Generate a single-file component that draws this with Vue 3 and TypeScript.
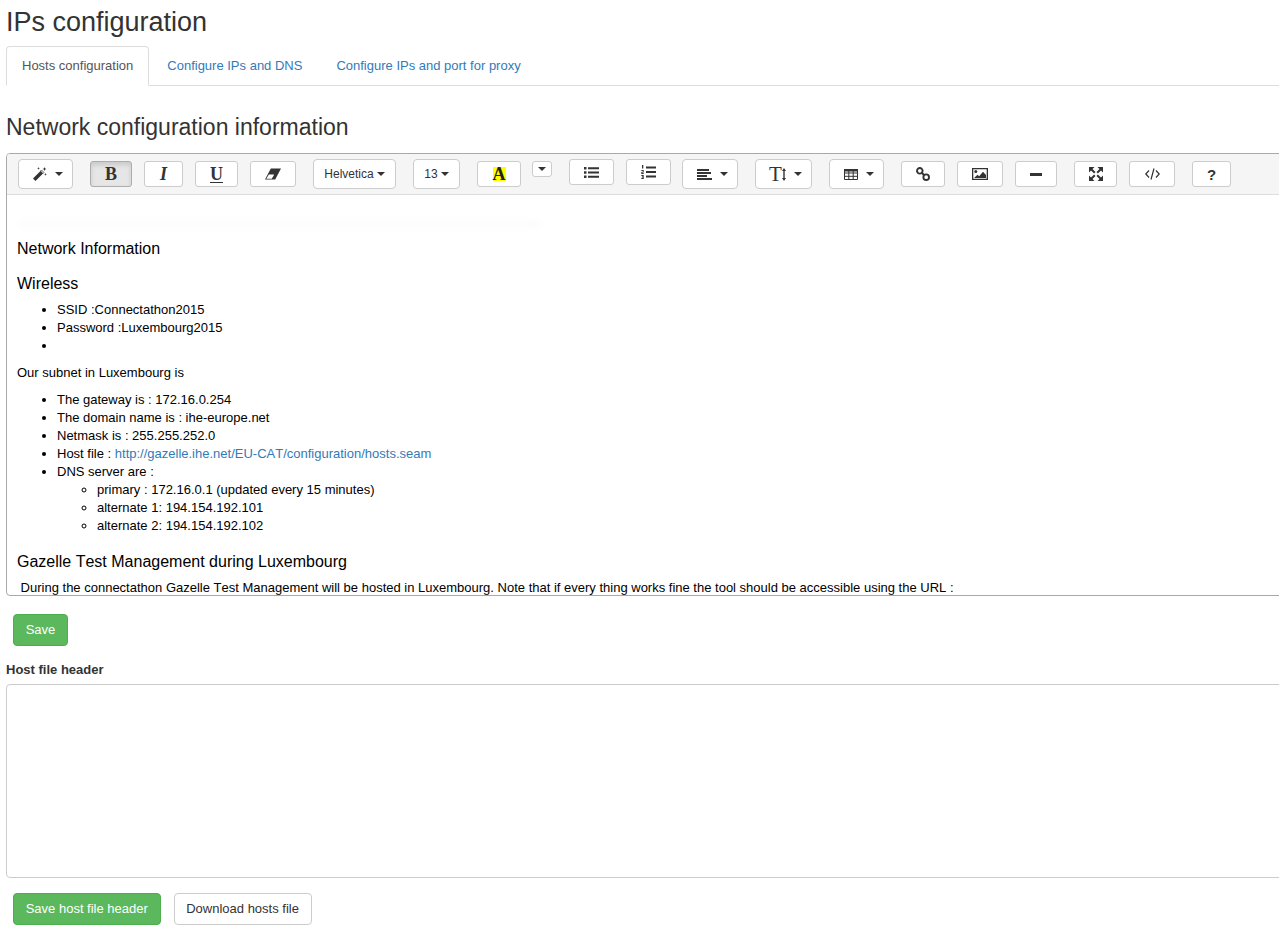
<script setup lang="ts">
const dns = ['primary : 172.16.0.1 (updated every 15 minutes)', 'alternate 1: 194.154.192.101', 'alternate 2: 194.154.192.102']
</script>

<template>
  <div class="page">
    <h1 class="title">IPs configuration</h1>
    <ul class="tabs">
      <li class="tab active">Hosts configuration</li>
      <li class="tab">Configure IPs and DNS</li>
      <li class="tab">Configure IPs and port for proxy</li>
    </ul>
    <h2 class="subtitle">Network configuration information</h2>

    <div class="editor">
      <div class="toolbar">
        <button class="btn tall drop w55 m0">
          <svg class="ico" viewBox="0 0 14 14"><path d="M0 11.500 8.500 3l2.500 2.500L2.500 14z" fill="#333"/><path d="M7.500 4 8.500 3 11 5.500l-1 1z" fill="#fff" stroke="#333" stroke-width=".6"/><path d="M11.500 0l.6 1.400 1.400.6-1.400.6-.6 1.400-.6-1.400-1.400-.6 1.400-.6zM5.500 0l.4 1 1 .4-1 .4-.4 1-.4-1-1-.4 1-.4zM12.500 6l.4 1 1 .4-1 .4-.4 1-.4-1-1-.4 1-.4z" fill="#333"/></svg>
          <i class="caret"></i>
        </button>
        <button class="btn short pressed serif m17 w42"><b>B</b></button>
        <button class="btn short serif m12 w39"><b><em>I</em></b></button>
        <button class="btn short serif m12 w43"><b class="under">U</b></button>
        <button class="btn short m12 w46">
          <svg class="eraser" viewBox="0 0 16 12"><path d="M5.800.5H16L10.200 11.500H0z" fill="#333"/><path d="M1.300 10.700 3.800 6.500h5.400L6.800 10.700z" fill="#fff"/></svg>
        </button>
        <button class="btn tall small m17 w83">Helvetica <i class="caret"></i></button>
        <button class="btn tall small m17 w47">13 <i class="caret"></i></button>
        <button class="btn short serif m17 w44"><b class="hl">A</b></button>
        <button class="btn mini m11 w20"><i class="caret"></i></button>
        <button class="btn mid m17 w45">
          <svg class="ico15" viewBox="0 0 15 11"><path d="M0 0h2.500v2.500H0zM0 4.200h2.500v2.500H0zM0 8.400h2.500v2.500H0zM4 .3h11v2H4zM4 4.500h11v2H4zM4 8.700h11v2H4z" fill="#333"/></svg>
        </button>
        <button class="btn mid m12 w45">
          <svg class="ico15 ol" viewBox="0 0 15 14"><path d="M5 1.500h10v2H5zM5 6h10v2H5zM5 10.500h10v2H5zM1 0h1.300v3.500H1zM.3 5h2.400v2.500H1.300v.6h1.400V9H.3V7h1.400v-.9H.3zM.3 10h2.400v4H.3v-.9h1.400v-.6H.9v-.9h.8v-.7H.3z" fill="#333"/></svg>
        </button>
        <button class="btn tall drop m11 w56">
          <svg class="ico15" viewBox="0 0 15 11"><path d="M0 0h12v2H0zM0 3h14v2H0zM0 6h10v2H0zM0 9h15v2H0z" fill="#333"/></svg>
          <i class="caret"></i>
        </button>
        <button class="btn tall drop m17 w57">
          <span class="ti">T<svg class="updown" viewBox="0 0 4 13"><path d="M2 0 4 3H2.700v7H4l-2 3-2-3h1.300V3H0z" fill="#333"/></svg></span>
          <i class="caret"></i>
        </button>
        <button class="btn tall drop m17 w55">
          <svg class="ico15 tbl" viewBox="0 0 14 11"><path fill="none" stroke="#333" stroke-width="1" d="M.5.500h13v10H.5zM.5 4h13M.5 7.300h13M4.800.5v10M9.200.5v10"/><path d="M0 0h14v2.400H0z" fill="#333"/></svg>
          <i class="caret"></i>
        </button>
        <button class="btn short m17 w44">
          <svg class="ico" viewBox="0 0 14 14"><circle cx="3.800" cy="3.800" r="2.800" fill="none" stroke="#333" stroke-width="1.900"/><circle cx="10.200" cy="10.200" r="2.800" fill="none" stroke="#333" stroke-width="1.900"/><path d="M5.500 5.500l3 3" stroke="#333" stroke-width="2"/></svg>
        </button>
        <button class="btn short m12 w46">
          <svg class="pic" viewBox="0 0 16 12"><path fill="none" stroke="#333" stroke-width="1.300" d="M.65.650h14.700v10.700H.65z"/><circle cx="3.800" cy="3.500" r="1.500" fill="#333"/><path d="M2 10l3.500-3.200 1.700 1.500L11 3.800l3 3.200V10z" fill="#333"/></svg>
        </button>
        <button class="btn short m12 w42"><span class="hr"></span></button>
        <button class="btn short m17 w43">
          <svg class="ico" viewBox="0 0 14 14"><path d="M0 0h5.500L0 5.500zM14 0v5.500L8.500 0zM0 14V8.500L5.500 14zM14 14H8.500L14 8.500z" fill="#333"/><path d="M2 2l3.800 3.800M12 2 8.200 5.800M2 12l3.800-3.800M12 12 8.200 8.200" stroke="#333" stroke-width="2" fill="none"/></svg>
        </button>
        <button class="btn short m12 w46">
          <svg class="codeic" viewBox="0 0 15 12"><path d="M4 2.500.8 6 4 9.500M11 2.500 14.200 6 11 9.500M9 .5 6 11.500" fill="none" stroke="#333" stroke-width="1.200"/></svg>
        </button>
        <button class="btn short m17 w39 help">?</button>
      </div>
      <div class="content">
        <div class="ghost"></div>
        <h3 class="h">Network Information</h3>
        <h3 class="h">Wireless</h3>
        <ul class="list">
          <li>SSID :Connectathon2015</li>
          <li>Password :Luxembourg2015</li>
          <li>&nbsp;</li>
        </ul>
        <p class="p">Our subnet in Luxembourg is</p>
        <ul class="list">
          <li>The gateway is : 172.16.0.254</li>
          <li>The domain name is : ihe-europe.net</li>
          <li>Netmask is : 255.255.252.0</li>
          <li>Host file : <a class="link">http://gazelle.ihe.net/EU-CAT/configuration/hosts.seam</a></li>
          <li>DNS server are :
            <ul class="sub">
              <li v-for="d in dns" :key="d">{{ d }}</li>
            </ul>
          </li>
        </ul>
        <h3 class="h">Gazelle Test Management during Luxembourg</h3>
        <p class="p">&nbsp;During the connectathon Gazelle Test Management will be hosted in Luxembourg. Note that if every thing works fine the tool should be accessible using the URL :</p>
      </div>
    </div>

    <div class="actions first"><button class="cta success">Save</button></div>
    <label class="lbl">Host file header</label>
    <textarea class="area"></textarea>
    <div class="actions">
      <button class="cta success">Save host file header</button>
      <button class="cta plain">Download hosts file</button>
    </div>
  </div>
</template>

<style>
html, body { margin: 0; background: #fff; overflow: hidden; }
</style>

<style scoped>
.page { width: 1279px; height: 950px; overflow: hidden; padding-left: 6px; box-sizing: border-box; font-family: "Liberation Sans", Arial, sans-serif; font-size: 13px; color: #333; font-kerning: none; }
.title { margin: 0; padding-top: 6px; font-size: 27px; line-height: 32px; font-weight: 400; }
.tabs { list-style: none; margin: 8px 0 0; padding: 0; display: flex; border-bottom: 1px solid #ddd; width: 1400px; height: 39px; }
.tab { padding: 0 16px 0 18px; line-height: 39px; color: #337ab7; }
.tab.active { color: #555; padding: 0 15px; height: 40px; box-sizing: border-box; background: #fff; border: 1px solid #ddd; border-bottom-color: #fff; border-radius: 4px 4px 0 0; line-height: 37px; }
.subtitle { margin: 28px 0 13px; font-size: 23px; line-height: 26px; font-weight: 400; }
.editor { width: 1400px; height: 443px; box-sizing: border-box; border: 1px solid #a9a9a9; border-radius: 4px 0 0 4px; overflow: hidden; }
.toolbar { height: 41px; box-sizing: border-box; background: #f5f5f5; border-bottom: 1px solid #ddd; display: flex; align-items: flex-start; padding: 5px 0 0 11px; }
.btn { box-sizing: border-box; background: #fff; border: 1px solid #ccc; border-radius: 3px; padding: 0; display: flex; align-items: center; justify-content: center; gap: 6px; color: #333; font-family: inherit; font-size: 14px; flex: none; }
.tall { height: 30px; border-radius: 4px; }
.drop { padding-left: 4px; gap: 8px; }
.short { height: 26px; margin-top: 2px; }
.mid { height: 26px; }
.mini { height: 16px; margin-top: 2px; }
.small { font-size: 12px; gap: 3px; }
.serif { font-family: "Liberation Serif", serif; font-size: 18px; }
.pressed { background: #e6e6e6; border-color: #adadad; box-shadow: inset 0 3px 5px rgba(0, 0, 0, .125); }
.under { text-decoration: underline; text-underline-offset: 2px; text-decoration-thickness: 1px; }
.hl { display: block; width: 13px; height: 14px; background: #ff0; line-height: 15px; text-align: center; font-size: 18px; color: #222; }
.m0 { margin-left: 0; } .m11 { margin-left: 11px; } .m12 { margin-left: 12px; } .m17 { margin-left: 17px; }
.w20 { width: 20px; } .w39 { width: 39px; } .w42 { width: 42px; } .w43 { width: 43px; } .w44 { width: 44px; } .w45 { width: 45px; } .w46 { width: 46px; } .w47 { width: 47px; } .w55 { width: 55px; } .w56 { width: 56px; } .w57 { width: 57px; } .w83 { width: 83px; }
.ico { width: 14px; height: 14px; }
.ico15 { width: 15px; height: 11px; }
.ico15.ol { height: 14px; }
.ico15.tbl { width: 14px; }
.eraser { width: 16px; height: 12px; }
.pic { width: 16px; height: 12px; }
.codeic { width: 15px; height: 12px; }
.caret { display: inline-block; width: 0; height: 0; border-top: 4px solid #333; border-left: 4px solid transparent; border-right: 4px solid transparent; }
.ti { font-family: "Liberation Serif", serif; font-size: 21px; line-height: 1; display: flex; align-items: center; color: #333; }
.updown { width: 4px; height: 13px; margin-left: 0; }
.hr { width: 12px; height: 3px; background: #333; }
.help { font-weight: 700; font-size: 15px; }
.content { position: relative; height: 400px; padding: 27px 0 0 10px; box-sizing: border-box; color: #000; overflow: hidden; }
.ghost { position: absolute; left: 12px; top: 26px; width: 524px; height: 6px; background: #fcfcfc; filter: blur(3px); }
.h { margin: 17.6px 0 8px; font-size: 16px; line-height: 18px; font-weight: 400; }
.p { margin: 0 0 9px; line-height: 18px; }
.list { margin: 0 0 9px; padding-left: 40px; line-height: 18px; }
.sub { margin: 0; padding-left: 40px; list-style: circle; }
.link { color: #337ab7; }
.actions { display: flex; gap: 13px; padding-left: 7px; }
.first { margin-top: 18px; }
.cta { height: 32px; box-sizing: border-box; padding: 0 11.7px 2px; border-radius: 4px; font-family: inherit; font-size: 13px; border: 1px solid #ccc; background: #fff; color: #333; }
.success { background: #5cb85c; border-color: #4cae4c; color: #fff; }
.lbl { display: block; margin-top: 15px; font-weight: 700; line-height: 18px; }
.area { display: block; margin: 5px 0 15px; width: 1400px; height: 194px; box-sizing: border-box; border: 1px solid #ccc; border-radius: 4px; background: #fff; }
</style>
